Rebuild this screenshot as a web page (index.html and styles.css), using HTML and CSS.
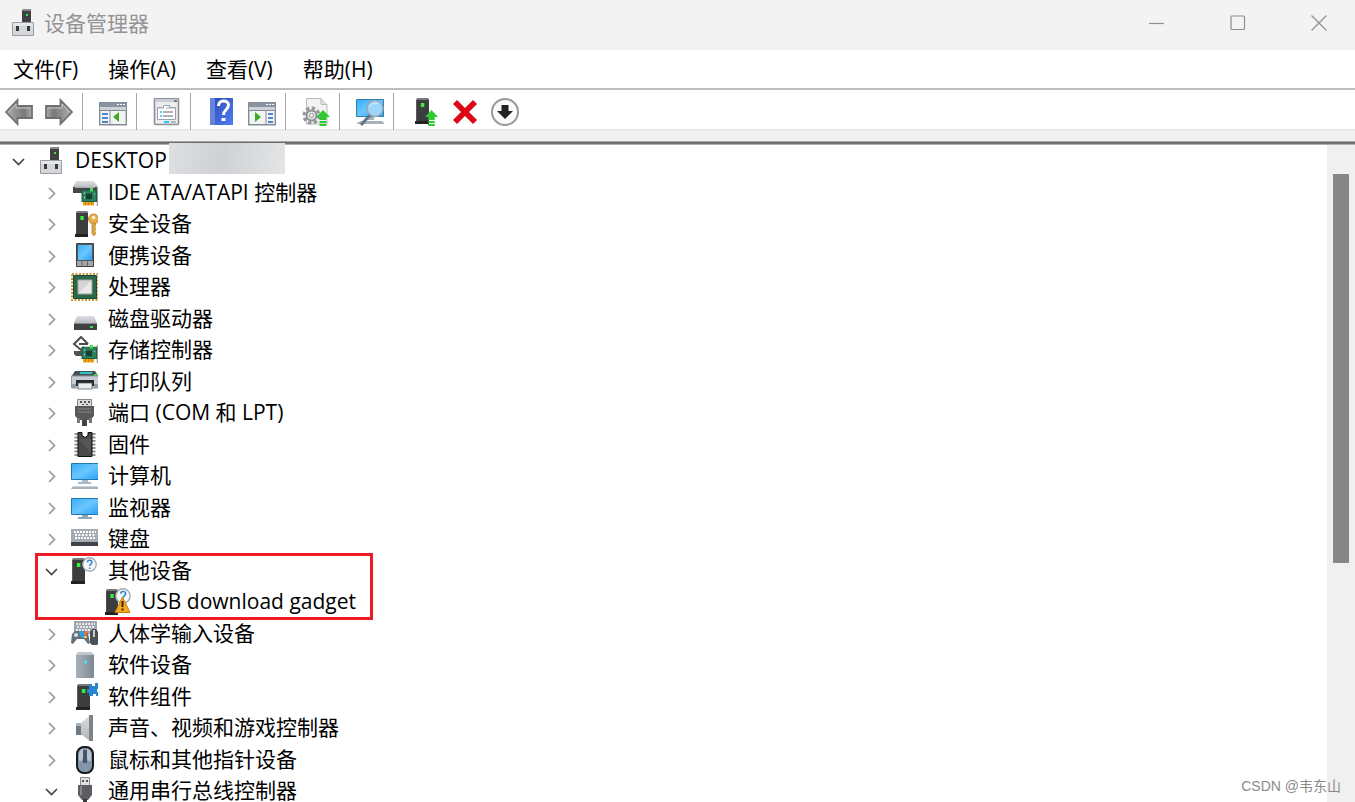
FILE: index.html
```html
<!DOCTYPE html>
<html lang="zh-CN">
<head>
<meta charset="utf-8">
<title>设备管理器</title>
<link rel="stylesheet" href="styles.css">
</head>
<body>
<svg class="defs" aria-hidden="true">
  <defs>
    <linearGradient id="g-blue" x1="0" y1="0" x2="1" y2="1"><stop offset="0" stop-color="#35aef8"/><stop offset=".5" stop-color="#6bc6ff"/><stop offset="1" stop-color="#27a0f5"/></linearGradient>
    <linearGradient id="g-gray" x1="0" y1="0" x2="0" y2="1"><stop offset="0" stop-color="#dfe0e4"/><stop offset="1" stop-color="#aeb1b7"/></linearGradient>
    <linearGradient id="g-arrow" x1="0" y1="0" x2="1" y2="0"><stop offset="0" stop-color="#b0b0b0"/><stop offset=".7" stop-color="#787878"/><stop offset="1" stop-color="#aaa"/></linearGradient>
    <linearGradient id="g-help" x1="0" y1="0" x2="1" y2="1"><stop offset="0" stop-color="#2c49b8"/><stop offset="1" stop-color="#4f7df0"/></linearGradient>
    <linearGradient id="g-steel" x1="0" y1="0" x2="1" y2="0"><stop offset="0" stop-color="#a9b2ba"/><stop offset="1" stop-color="#7d8891"/></linearGradient>
    <symbol id="i-chev-r" viewBox="0 0 20 20"><path d="M8 5l5.500 5.500L8 16" fill="none" stroke="#9a9a9a" stroke-width="1.700"/></symbol>
    <symbol id="i-chev-d" viewBox="0 0 20 20"><path d="M5 8l5.500 5.500L16 8" fill="none" stroke="#444" stroke-width="1.700"/></symbol>
    <symbol id="i-tower" viewBox="0 0 12 26" preserveAspectRatio="none"><path d="M0 23h12v3H0z" fill="#222"/><path d="M1 2l1-2h9l1 2v21H1z" fill="#3c3d3f"/><path d="M1 2l1-2h9l1 2z" fill="#77797c"/><path d="M5 5h3v4H5z" fill="#3bf03b"/></symbol>
    <symbol id="i-root" viewBox="0 0 28 28"><path d="M13 1.500L14 0h8v14h-9z" fill="#3e4042"/><path d="M13 2l1-2h7.500l.5 2z" fill="#85888c"/><path d="M17 5h2v2h-2z" fill="#3be83b"/><path d="M3.500 13.500h21v13h-21z" fill="#d5d6da" stroke="#9a9da2"/><path d="M4 14h20v3H4z" fill="#e6e7ea"/><path d="M7 17h3v5H7zM18 17h3v5h-3z" fill="#35373b"/></symbol>
    <symbol id="i-board" viewBox="0 0 18 16" preserveAspectRatio="none"><path d="M16.500 0v16" stroke="#9a9da0" stroke-width="1.500"/><path d="M2 11h11v4.500H2z" fill="#f2a114"/><path d="M4.500 11v4M7.500 11v4M10.500 11v4" stroke="#bd6d05" stroke-width=".6"/><path d="M1 2h14.500v10H1z" fill="#29825c" stroke="#1b5c41"/><path d="M5 5h6v5H5z" fill="#183f35"/><path d="M9 0h3v3H9z" fill="#45e34d"/><path d="M3 4h1v1H3zM3 8h1v1H3zM13 5h1v1h-1z" fill="#c6ddcc"/></symbol>
    <symbol id="i-ide" viewBox="0 0 28 28"><path d="M6 2h18l4 6v2H3V8z" fill="url(#g-gray)"/><path d="M3 8h24v6H3z" fill="#45474a"/><path d="M5 8h20v1H5z" fill="#aaa"/><use href="#i-board" x="11" y="9" width="18" height="18"/></symbol>
    <symbol id="i-security" viewBox="0 0 28 28"><use href="#i-tower" x="5" y="1" width="13" height="26"/><circle cx="23.500" cy="9" r="5" fill="#e5ad4e" stroke="#c48b33"/><circle cx="23.500" cy="7.500" r="1.800" fill="#fff3d0"/><path d="M22 13h3.500v3l-1 1 1 1v2l-1 1 1 1v2L24 26l-2-2z" fill="#dba342" stroke="#bd842e" stroke-width=".7"/></symbol>
    <symbol id="i-portable" viewBox="0 0 28 28"><path d="M6.500 1.500h17v23h-17z" fill="#54585d" stroke="#404347"/><path d="M8 3h14v15H8z" fill="url(#g-blue)"/><path d="M7 19h16v5H7z" fill="#a3a7ab"/><path d="M12 19v5M17.500 19v5" stroke="#666"/></symbol>
    <symbol id="i-cpu" viewBox="0 0 28 28"><path d="M2 1h26v26H2z" fill="none" stroke="#c79a3c" stroke-width="2" stroke-dasharray="2 1.500"/><path d="M3.500 2.500h23v23h-23z" fill="#2c6748" stroke="#1e4933"/><path d="M8 7h14v14H8z" fill="#d4d5d4" stroke="#a8aaa8"/><path d="M21 8v12H9z" fill="#ececec"/></symbol>
    <symbol id="i-disk" viewBox="0 0 28 28"><path d="M7 11h17l3 7v2H4v-2z" fill="url(#g-gray)"/><path d="M4 18h23v7H4z" fill="#3f4144"/><path d="M4 18h23v1H4z" fill="#888b90"/><path d="M20 21h3v2h-3z" fill="#3be44b"/></symbol>
    <symbol id="i-storage" viewBox="0 0 28 28"><path d="M16 6l-5-5-7 7 7 6 3-3M9 8h9M14 4l4 4" fill="none" stroke="#4b4d50" stroke-width="2"/><path d="M4 15h8l3 5H6l-2-2z" fill="#505256"/><use href="#i-board" x="11" y="9" width="18" height="18"/></symbol>
    <symbol id="i-printer" viewBox="0 0 28 28"><path d="M5 3h20l4 6H1z" fill="#484e55"/><path d="M10 4h12v2H10z" fill="#30c6b5"/><path d="M1.500 8h27v12h-27z" fill="#c6ccd2" stroke="#8f979f"/><path d="M24 6h3v2h-3z" fill="#35df4a"/><path d="M6 12h18v6H6z" fill="#25282c"/><path d="M8 15h14v6H8z" fill="#eceef0" stroke="#555" stroke-width=".7"/><path d="M2 16h4v4H2zM24 16h4v4h-4z" fill="#8f9eac"/></symbol>
    <symbol id="i-port" viewBox="0 0 28 28"><path d="M7.500.5h14v8h-14z" fill="#dcdcdc" stroke="#858585"/><path d="M10 2h2v2h-2zM14 2h2v2h-2zM18 2h2v2h-2zM12 5h2v1h-2zM16 5h2v1h-2z" fill="#555"/><path d="M5 7h19v10l-4 4H9l-4-4z" fill="#58595b"/><path d="M8 10h13M8 13h13" stroke="#858789"/><path d="M7 19h3v5H7zM19 19h3v5h-3z" fill="#747678"/><path d="M12 21h5v6h-5z" fill="#424345"/></symbol>
    <symbol id="i-chip" viewBox="0 0 28 28"><path d="M6.500 2v24M23.500 2v24" fill="none" stroke="#949494" stroke-width="4" stroke-dasharray="2 1.500"/><path d="M8 1.500h4v3l3 2 3-2v-3h4v24H8z" fill="#4a4a4a" stroke="#111"/><path d="M9 8l12 15V8z" fill="#616161" opacity=".5"/></symbol>
    <symbol id="i-computer" viewBox="0 0 28 28"><path d="M1.500 1.500h27v16h-27z" fill="url(#g-blue)" stroke="#1f78b0"/><path d="M12 18h6v2h3v2H8v-2h4z" fill="#a8bac8"/><path d="M3 24h24l2 3H1z" fill="#a7b4be"/><path d="M3 24h24v1H3z" fill="#ced7dd"/></symbol>
    <symbol id="i-monitor" viewBox="0 0 28 28"><path d="M1.500 4.500h27v16h-27z" fill="url(#g-blue)" stroke="#1f78b0"/><path d="M12 21h6v2h4v2H8v-2h4z" fill="#91a8b7"/></symbol>
    <symbol id="i-keyboard" viewBox="0 0 28 28"><path d="M1 4h28v14H1z" fill="#a5abb3"/><path d="M4 7h22M5 13h20" stroke="#fff" stroke-width="2" stroke-dasharray="2 1"/><path d="M5 10h20" stroke="#fff" stroke-width="2" stroke-dasharray="2 1.500"/><path d="M1 17h28v4H1z" fill="#41454b"/></symbol>
    <symbol id="i-quest" viewBox="0 0 14 14"><circle cx="7" cy="7" r="6.300" fill="#f5f7f9" stroke="#a2aab0" stroke-width="1.200"/><path d="M5 5c0-2.500 4.300-2.500 4.300 0 0 1.800-2.200 1.500-2.200 3.500M7.100 9.700v1.500" fill="none" stroke="#3385c9" stroke-width="1.400"/></symbol>
    <symbol id="i-other" viewBox="0 0 28 28"><use href="#i-tower" x="1" y="1" width="14" height="26"/><use href="#i-quest" x="12" y="0" width="15" height="15"/></symbol>
    <symbol id="i-usbwarn" viewBox="0 0 28 28"><use href="#i-tower" x="2" y="1" width="13" height="26"/><use href="#i-quest" x="12" y="0" width="16" height="16"/><path d="M19.500 9L27 24.500H12z" fill="#f3a81d" stroke="#cb7c08" stroke-linejoin="round"/><path d="M19.500 13v6M19.500 20.500v2" stroke="#3a2505" stroke-width="2"/></symbol>
    <symbol id="i-hid" viewBox="0 0 28 28"><path d="M4 1h23v13H4z" fill="#a0a6ad"/><path d="M6 4h19M7 7h18M6 10h19" stroke="#fff" stroke-width="1.500" stroke-dasharray="2 1"/><path d="M5 11h10l3 2 2 10-2 1-4-5H7l-4 5-2-1 1-9z" fill="#64707d"/><circle cx="6" cy="15" r="2" fill="#d9e0e5"/><path d="M9 11h4l3 4-3 3-3-2z" fill="#2d9fdc"/><path d="M14 11h3v4h-3z" fill="#ed6c35"/><path d="M14 16h3v2h-3z" fill="#ffc23b"/><path d="M22 9h4l3 4v10l-2 2h-5l-2-2V12z" fill="#4c5156"/><path d="M24 10v7" stroke="#c8cdd0" stroke-width="2"/></symbol>
    <symbol id="i-softdev" viewBox="0 0 28 28"><path d="M6 4l2-3h13l3 3v23H6z" fill="url(#g-steel)"/><path d="M6 4l2-3h13l3 3z" fill="#c1c9cf"/><path d="M14 9l3 1v3l-3-1z" fill="#3ee5f7"/></symbol>
    <symbol id="i-softcomp" viewBox="0 0 28 28"><use href="#i-tower" x="6" y="1" width="14" height="26"/><path d="M19 1h3v2h3V0h3v2h1v4h-2v3h2v4h-3v-2h-3v2h-4v-3h-2V6h2z" fill="#2786d2"/></symbol>
    <symbol id="i-sound" viewBox="0 0 28 28"><path d="M6 9h6v12H6z" fill="#6e7a84"/><path d="M11 9l9-8v26l-9-7z" fill="url(#g-gray)"/><path d="M19 1h4v26h-4z" fill="#7c8389"/><path d="M6 9h5v3H6z" fill="#aab4bd"/></symbol>
    <symbol id="i-mouse" viewBox="0 0 28 28"><rect x="7" y="1" width="16" height="26" rx="7" fill="#8297ad" stroke="#18191b" stroke-width="2"/><path d="M9 8c0-3 2-5 4-5v8c0 5-4 5-4 2zM21 8c0-3-2-5-4-5v8c0 5 4 5 4 2z" fill="#b7c6d4"/><path d="M13 4h4v13h-4z" fill="#4a535e"/></symbol>
    <symbol id="i-usb" viewBox="0 0 28 28"><path d="M10.500.5h9v8h-9z" fill="#e0e0e0" stroke="#8b8b8b"/><path d="M12 3h2v2h-2zM16 3h2v2h-2z" fill="#555"/><path d="M8 8h14v10l-4 5h-6l-4-5z" fill="#5b5d60"/><path d="M11 9v9" stroke="#85878a" stroke-width="2"/><path d="M13 22h4v6h-4z" fill="#38393b"/></symbol>
    <symbol id="i-up" viewBox="0 0 12 16" preserveAspectRatio="none"><path d="M6 0l6 7H9v3H3V7H0z" fill="#32c832"/><path d="M3 11h6v2H3zM3 14h6v2H3z" fill="#24ce2b"/></symbol>
    <symbol id="i-back" viewBox="0 0 28 28"><path d="M1 14L12.500 2v6H27v12H12.500v6z" fill="url(#g-arrow)" stroke="#707070" stroke-width="1.800"/><path d="M3.500 14l7.500-8v4h14" fill="none" stroke="#c7c7c7"/></symbol>
    <symbol id="i-panel" viewBox="0 0 28 28"><path d="M.7 4.700h26.600v22H.7z" fill="#f2f3f4" stroke="#858b94" stroke-width="1.400"/><path d="M1 5h26v4H1z" fill="#8993a2"/><path d="M18 6h2v1h-2zM21 6h2v1h-2zM24 6h2v1h-2z" fill="#fff"/><path d="M1 9h26v3H1z" fill="#cfd2d6"/><path d="M11 12v15M1 12.500h26" stroke="#858b94"/><path d="M3 16h6M3 20h6M3 24h6" stroke="#4d87c6" stroke-width="2"/><path d="M20 14v10l-6-5z" fill="#3cac27"/></symbol>
    <symbol id="i-panel-r" viewBox="0 0 28 28"><path d="M.7 4.700h26.600v22H.7z" fill="#f2f3f4" stroke="#858b94" stroke-width="1.400"/><path d="M1 5h26v4H1z" fill="#8993a2"/><path d="M18 6h2v1h-2zM21 6h2v1h-2zM24 6h2v1h-2z" fill="#fff"/><path d="M1 9h26v3H1z" fill="#cfd2d6"/><path d="M18 12v15M1 12.500h26" stroke="#858b94"/><path d="M20 16h5M20 20h5M20 24h5" stroke="#4d87c6" stroke-width="2"/><path d="M7 14v10l6-5z" fill="#3cac27"/></symbol>
    <symbol id="i-props" viewBox="0 0 28 28"><rect x="1.500" y=".5" width="24" height="26" rx="1" fill="#ececee" stroke="#8d9098" stroke-width="1.600"/><path d="M2 1h23v3H2z" fill="#c9ccd3"/><path d="M21 2h3v2h-3z" fill="#6a7590"/><path d="M4.500 9.500v12h18v-12h-6v-2h-6v2z" fill="#fff" stroke="#9aa0ae"/><path d="M5 10h6M13 10h9" stroke="#a6acb8"/><path d="M10 14h10M10 18h10" stroke="#666" stroke-width="1.200"/><path d="M7 14h2M7 18h2" stroke="#2ebdf0" stroke-width="1.500"/><path d="M11 23h5v2h-5z" fill="#26c5fa"/><path d="M18 23h5v2h-5z" fill="#b6b8bd"/></symbol>
    <symbol id="i-help" viewBox="0 0 28 28"><path d="M2 0h23v27H2z" fill="url(#g-help)"/><path d="M2 0h5v27H2z" fill="#6684dc"/><path d="M10.500 8c0-7 10-6 10-1 0 5-5 4.500-5 10" fill="none" stroke="#fff" stroke-width="3"/><path d="M13.500 20h4v3h-4z" fill="#fff"/></symbol>
    <symbol id="i-update" viewBox="0 0 28 28"><path d="M4.500.5H19l6 6V26H4.500z" fill="#f2f2f2" stroke="#bbb"/><path d="M19 .5v6h6" fill="#ddd" stroke="#bbb"/><circle cx="9.500" cy="17.500" r="7.500" fill="none" stroke="#92979b" stroke-width="3" stroke-dasharray="3.500 2.390"/><circle cx="9.500" cy="17.500" r="5" fill="#e2e4e5" stroke="#8c9195" stroke-width="2"/><circle cx="9.500" cy="17.500" r="2" fill="#fff" stroke="#8c9195"/><use href="#i-up" x="14" y="12" width="14" height="16"/></symbol>
    <symbol id="i-scan" viewBox="0 0 28 28"><path d="M.5 1.500h27v17H.5z" fill="url(#g-blue)" stroke="#2c7eae"/><path d="M10 19h8v3h-8zM1 25l4-2h21l2 2v1H1z" fill="#a5b2bc"/><path d="M14 17l-9 10" stroke="#647585" stroke-width="3"/><circle cx="19" cy="10.500" r="8" fill="#9cd5f8" stroke="#91a8b6" stroke-width="1.500"/><path d="M14 9c1-4 5-5 8-3" fill="none" stroke="#d9f1ff"/></symbol>
    <symbol id="i-enable" viewBox="0 0 28 28"><use href="#i-tower" x="4" y="0" width="14" height="26"/><use href="#i-up" x="14" y="12" width="13" height="16"/></symbol>
    <symbol id="i-remove" viewBox="0 0 28 28"><path d="M6 2l8 8 8-8 4 4-8 8 8 8-4 4-8-8-8 8-4-4 8-8-8-8z" fill="#dc0713"/></symbol>
    <symbol id="i-disable" viewBox="0 0 28 28"><circle cx="14" cy="14" r="13" fill="#fafafa" stroke="#999" stroke-width="2"/><path d="M10.500 7h7v6H22l-8 8-8-8h4.500z" fill="#222"/></symbol>
  </defs>
</svg>

<header class="titlebar">
  <svg class="icon"><use href="#i-root"/></svg>
  <h1 class="title">设备管理器</h1>
  <div class="window-controls">
    <button class="control" aria-label="最小化"><svg viewBox="0 0 16 16"><path d="M0 8.500h15"/></svg></button>
    <button class="control" aria-label="最大化"><svg viewBox="0 0 16 16"><rect x="1" y="1" width="13.500" height="13.500" rx="1"/></svg></button>
    <button class="control" aria-label="关闭"><svg viewBox="0 0 16 16"><path d="M.5.5l15 15M15.500.5l-15 15"/></svg></button>
  </div>
</header>

<nav class="menubar">
  <button class="menu">文件(F)</button>
  <button class="menu">操作(A)</button>
  <button class="menu">查看(V)</button>
  <button class="menu">帮助(H)</button>
</nav>

<div class="toolbar" role="toolbar">
  <div class="group">
    <button class="tool" aria-label="后退"><svg class="icon"><use href="#i-back"/></svg></button>
    <button class="tool" aria-label="前进"><svg class="icon flip"><use href="#i-back"/></svg></button>
  </div>
  <div class="group"><button class="tool" aria-label="显示控制台树"><svg class="icon"><use href="#i-panel"/></svg></button></div>
  <div class="group"><button class="tool" aria-label="属性"><svg class="icon"><use href="#i-props"/></svg></button></div>
  <div class="group wide">
    <button class="tool" aria-label="帮助"><svg class="icon"><use href="#i-help"/></svg></button>
    <button class="tool" aria-label="显示操作窗格"><svg class="icon"><use href="#i-panel-r"/></svg></button>
  </div>
  <div class="group"><button class="tool" aria-label="更新驱动程序"><svg class="icon"><use href="#i-update"/></svg></button></div>
  <div class="group"><button class="tool" aria-label="扫描硬件改动"><svg class="icon"><use href="#i-scan"/></svg></button></div>
  <div class="group wide">
    <button class="tool" aria-label="启用设备"><svg class="icon"><use href="#i-enable"/></svg></button>
    <button class="tool" aria-label="卸载设备"><svg class="icon"><use href="#i-remove"/></svg></button>
    <button class="tool" aria-label="禁用设备"><svg class="icon"><use href="#i-disable"/></svg></button>
  </div>
</div>

<main class="content">
  <div class="tree">
    <div class="rows">
      <div class="row root"><button class="toggle" aria-label="折叠"><svg><use href="#i-chev-d"/></svg></button><svg class="icon"><use href="#i-root"/></svg><span class="label">DESKTOP</span><span class="mask"></span></div>
      <div class="row"><button class="toggle" aria-label="展开"><svg><use href="#i-chev-r"/></svg></button><svg class="icon"><use href="#i-ide"/></svg><span class="label">IDE ATA/ATAPI 控制器</span></div>
      <div class="row"><button class="toggle" aria-label="展开"><svg><use href="#i-chev-r"/></svg></button><svg class="icon"><use href="#i-security"/></svg><span class="label">安全设备</span></div>
      <div class="row"><button class="toggle" aria-label="展开"><svg><use href="#i-chev-r"/></svg></button><svg class="icon"><use href="#i-portable"/></svg><span class="label">便携设备</span></div>
      <div class="row"><button class="toggle" aria-label="展开"><svg><use href="#i-chev-r"/></svg></button><svg class="icon"><use href="#i-cpu"/></svg><span class="label">处理器</span></div>
      <div class="row"><button class="toggle" aria-label="展开"><svg><use href="#i-chev-r"/></svg></button><svg class="icon"><use href="#i-disk"/></svg><span class="label">磁盘驱动器</span></div>
      <div class="row"><button class="toggle" aria-label="展开"><svg><use href="#i-chev-r"/></svg></button><svg class="icon"><use href="#i-storage"/></svg><span class="label">存储控制器</span></div>
      <div class="row"><button class="toggle" aria-label="展开"><svg><use href="#i-chev-r"/></svg></button><svg class="icon"><use href="#i-printer"/></svg><span class="label">打印队列</span></div>
      <div class="row"><button class="toggle" aria-label="展开"><svg><use href="#i-chev-r"/></svg></button><svg class="icon"><use href="#i-port"/></svg><span class="label">端口 (COM 和 LPT)</span></div>
      <div class="row"><button class="toggle" aria-label="展开"><svg><use href="#i-chev-r"/></svg></button><svg class="icon"><use href="#i-chip"/></svg><span class="label">固件</span></div>
      <div class="row"><button class="toggle" aria-label="展开"><svg><use href="#i-chev-r"/></svg></button><svg class="icon"><use href="#i-computer"/></svg><span class="label">计算机</span></div>
      <div class="row"><button class="toggle" aria-label="展开"><svg><use href="#i-chev-r"/></svg></button><svg class="icon"><use href="#i-monitor"/></svg><span class="label">监视器</span></div>
      <div class="row"><button class="toggle" aria-label="展开"><svg><use href="#i-chev-r"/></svg></button><svg class="icon"><use href="#i-keyboard"/></svg><span class="label">键盘</span></div>
    </div>
    <div class="rows late marked">
      <div class="row"><button class="toggle" aria-label="折叠"><svg><use href="#i-chev-d"/></svg></button><svg class="icon"><use href="#i-other"/></svg><span class="label">其他设备</span></div>
      <div class="row leaf"><svg class="icon"><use href="#i-usbwarn"/></svg><span class="label">USB download gadget</span></div>
    </div>
    <div class="rows late">
      <div class="row"><button class="toggle" aria-label="展开"><svg><use href="#i-chev-r"/></svg></button><svg class="icon"><use href="#i-hid"/></svg><span class="label">人体学输入设备</span></div>
      <div class="row"><button class="toggle" aria-label="展开"><svg><use href="#i-chev-r"/></svg></button><svg class="icon"><use href="#i-softdev"/></svg><span class="label">软件设备</span></div>
      <div class="row"><button class="toggle" aria-label="展开"><svg><use href="#i-chev-r"/></svg></button><svg class="icon"><use href="#i-softcomp"/></svg><span class="label">软件组件</span></div>
      <div class="row"><button class="toggle" aria-label="展开"><svg><use href="#i-chev-r"/></svg></button><svg class="icon"><use href="#i-sound"/></svg><span class="label">声音、视频和游戏控制器</span></div>
      <div class="row"><button class="toggle" aria-label="展开"><svg><use href="#i-chev-r"/></svg></button><svg class="icon"><use href="#i-mouse"/></svg><span class="label">鼠标和其他指针设备</span></div>
      <div class="row"><button class="toggle" aria-label="折叠"><svg><use href="#i-chev-d"/></svg></button><svg class="icon"><use href="#i-usb"/></svg><span class="label">通用串行总线控制器</span></div>
    </div>
  </div>
  <div class="scrollbar"><div class="thumb"></div></div>
</main>
<div class="watermark">CSDN @韦东山</div>
</body>
</html>
```

FILE: styles.css
```css
* { box-sizing: border-box; }

body {
  margin: 0;
  height: 100vh;
  display: flex;
  flex-direction: column;
  overflow: hidden;
  background: #fff;
  color: #000;
  font: 21px/26px "Open Sans", "Noto Sans CJK SC", sans-serif;
}

button {
  margin: 0;
  padding: 0;
  border: 0;
  background: none;
  color: inherit;
  font: inherit;
}

.defs { position: absolute; width: 0; height: 0; }

.icon { display: block; flex: none; width: 28px; height: 28px; overflow: visible; }
.flip { transform: scaleX(-1); }

.titlebar {
  flex: none;
  display: flex;
  align-items: center;
  height: 50px;
  padding: 0 28px 5px 9px;
  background: #f3f3f3;
}
.title { margin: 0 0 0 7px; font-size: 21px; font-weight: 400; color: #949494; }
.window-controls { display: flex; gap: 65px; margin-left: auto; }
.control svg { display: block; width: 16px; height: 16px; fill: none; stroke: #8f8f8f; stroke-width: 1.2; }

.menubar {
  flex: none;
  display: flex;
  align-items: center;
  gap: 30px;
  height: 38px;
  padding: 0 13px;
}

.toolbar {
  flex: none;
  display: flex;
  height: 57px;
  padding: 3px 5px 15px;
  border-top: 2px solid #bdbdbf;
  background: linear-gradient(#fff 39px, #e2e2e2 39px, #f0f0f0 41px, #f0f0f0 51px, #a8a8a8 51px, #a8a8a8 52px, #666 52px, #777 54px, #b0b0b0 54px);
}
.group { display: flex; align-items: center; gap: 12px; padding: 0 9px 0 16px; border-right: 1px solid #a5a5a5; }
.wide { padding-left: 17px; }
.group:first-child { padding-left: 0; }
.group:last-child { border-right: 0; }
.tool { display: block; }

.content { flex: 1; min-height: 0; display: flex; }
.tree { flex: 1; min-width: 0; display: flex; flex-direction: column; align-items: flex-start; }
.row { display: flex; align-items: center; height: 32px; padding-left: 41px; white-space: nowrap; }
.rows:not(.late) .row:nth-child(even),
.late .row:nth-child(odd) { height: 31px; }
.root { padding-left: 8px; }
.leaf { padding-left: 103px; }
.toggle { flex: none; width: 20px; height: 20px; margin-right: 9px; }
.toggle svg { display: block; width: 20px; height: 20px; }
.label { margin-left: 10px; padding-bottom: 2px; }
.mask {
  align-self: flex-start;
  width: 116px;
  height: 31px;
  margin: -2px 0 0 2px;
  background: linear-gradient(100deg, #dedfe1, #d0d1d4 45%, #e4e5e6);
}

.marked { position: relative; padding-right: 17px; }
.marked::after {
  content: "";
  position: absolute;
  inset: -2px 0 -2px 35px;
  border: 3px solid #ed1c24;
}

.scrollbar { flex: none; width: 28px; padding: 29px 6px 0; background: #f0f0f0; }
.thumb { height: 62%; background: #868686; }

.watermark {
  position: absolute;
  right: 14px;
  bottom: 6px;
  font: 14px/20px "Liberation Sans", "Noto Sans CJK SC", sans-serif;
  color: #8a8a8a;
}
```
